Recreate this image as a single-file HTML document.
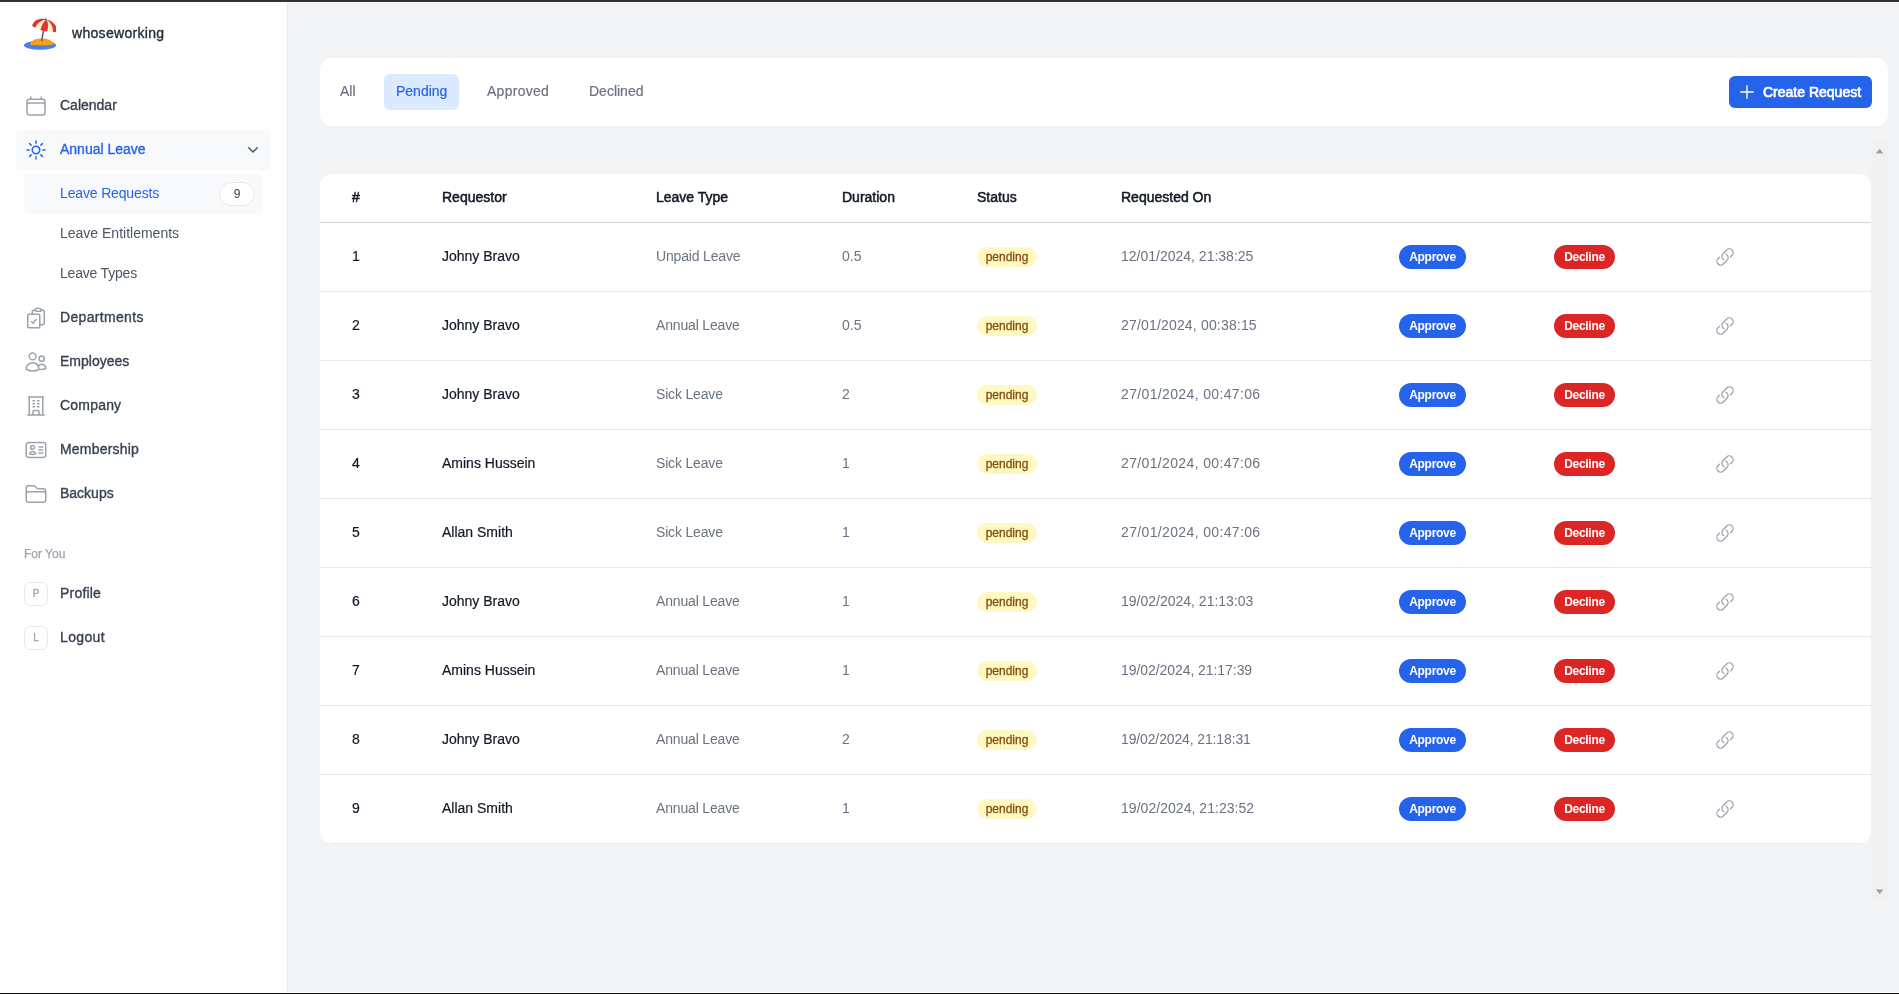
<!DOCTYPE html>
<html><head><meta charset="utf-8"><style>
*{box-sizing:border-box;margin:0;padding:0}
html,body{width:1899px;height:994px;overflow:hidden;background:#fff}
body{position:relative;font-family:"Liberation Sans",sans-serif;color:#111827}
#topbar{position:absolute;left:0;top:0;width:1899px;height:2px;background:#2f3035}
#botbar{position:absolute;left:0;top:993px;width:1899px;height:1px;background:#111}
#side{position:absolute;left:0;top:3px;width:288px;height:989px;background:#fff;border-right:1px solid #e5e7eb}
#main{position:absolute;left:288px;top:3px;width:1611px;height:989px;background:#f3f4f6}
.abs{position:absolute}
.ic{position:absolute;fill:none;stroke-linecap:round;stroke-linejoin:round}
.t{position:absolute;white-space:nowrap;will-change:transform}
.brand{font-size:14px;color:#1f2937;-webkit-text-stroke:0.35px #1f2937;letter-spacing:0.3px}
.nav{font-size:14px;color:#374151;-webkit-text-stroke:0.35px #374151}
.nav.act{color:#2563eb;-webkit-text-stroke:0.35px #2563eb}
.sub{font-size:14px;color:#4b5563}
.sub.act{color:#2563eb}
.hl{position:absolute;background:#f8f9fb;border-radius:5px}
.badge9{will-change:transform;position:absolute;left:219px;top:182px;width:36px;height:24px;border:1px solid #e5e7eb;border-radius:12px;background:#fff;font-size:12px;line-height:22px;text-align:center;color:#374151}
.foryou{font-size:12px;color:#9ca3af;-webkit-text-stroke:0.25px #9ca3af}
.av{will-change:transform;position:absolute;width:24px;height:24px;border:1px solid #e5e7eb;border-radius:6px;font-size:10px;line-height:22px;text-align:center;color:#9ca3af;background:#fff;-webkit-text-stroke:0.3px #9ca3af}
.card{position:absolute;background:#fff;border-radius:12px}
.tabbg{position:absolute;background:#dbeafe;border-radius:6px}
.tab{font-size:14px;color:#6b7280;-webkit-text-stroke:0.2px #6b7280}
.tab.act{color:#2563eb;-webkit-text-stroke:0.2px #2563eb}
.btn{position:absolute;background:#2563eb;border-radius:6px}
.btntxt{font-size:14px;color:#fff;-webkit-text-stroke:0.7px #fff}
.th{font-size:14px;color:#111827;-webkit-text-stroke:0.5px #111827}
.td1{font-size:14px;color:#111827;-webkit-text-stroke:0.2px #111827}
.td2{font-size:14px;color:#6b7280}
.pend{will-change:transform;position:absolute;width:60px;height:20px;border-radius:10px;background:#fef9c3;color:#854d0e;font-size:12px;line-height:20px;text-align:center;-webkit-text-stroke:0.3px #854d0e}
.pill{will-change:transform;position:absolute;height:24px;border-radius:12px;color:#fff;font-size:12px;font-weight:bold;line-height:24px;text-align:center;letter-spacing:-0.3px}
.ap{background:#2563eb}
.de{background:#dc2626}
</style></head>
<body>
<div id="topbar"></div>
<div id="side"></div><div id="main"></div>
<svg class="abs" style="left:24px;top:18px;width:32px;height:32px" viewBox="0 0 32 32">
<ellipse cx="16" cy="27.3" rx="16" ry="4.5" fill="#4a80e8"/>
<path d="M6 26.8 C6.5 22.6 11.5 20.6 17.5 20.6 C23.5 20.6 28.8 22.4 29.5 26.4 C22 27.6 13 27.6 6 26.8z" fill="#f4a019"/>
<path d="M21.7 1 L17.6 23.2" stroke="#59606b" stroke-width="1.5"/>
<g transform="rotate(14 21 8)">
<path d="M21 1.2 C14 1.2 8.5 5 8.5 10.8 Q10.75 12.4 13 11.9 Q15.25 13.2 17.5 12.8 Q21 14.2 24.5 12.8 Q26.75 13.2 29 11.9 Q31.25 12.4 33.5 10.8 C33.5 5 28 1.2 21 1.2 Z" fill="#fdf3c0"/>
<path d="M21 1.2 C14 1.2 8.5 5 8.5 10.8 Q10.25 12.2 12 11.7 C12.5 7.5 15.5 3.5 21 1.2 Z" fill="#df343c"/>
<path d="M21 1.2 C18.5 4 17.5 8 17.5 12.8 Q21 14.2 24.5 12.8 C24.5 8 23.5 4 21 1.2 Z" fill="#df343c"/>
<path d="M21 1.2 C28 1.2 33.5 5 33.5 10.8 Q31.75 12.2 30 11.7 C29.5 7.5 26.5 3.5 21 1.2 Z" fill="#df343c"/>
</g>
<path d="M22 0.3 L21.7 2.2" stroke="#59606b" stroke-width="1.4"/>
</svg>
<div class="t brand" style="left:72px;top:23.0px;height:20px;line-height:20px">whoseworking</div>
<div class="hl" style="left:16px;top:130px;width:255px;height:40px"></div>
<div class="hl" style="left:24px;top:174px;width:239px;height:40px"></div>
<svg class="ic" style="left:24px;top:94px;width:24px;height:24px;stroke:#9ca3af;stroke-width:1.5" viewBox="0 0 24 24"><path d="M6.75 3v2.25M17.25 3v2.25M3 18.75V7.5a2.25 2.25 0 012.25-2.25h13.5A2.25 2.25 0 0121 7.5v11.25m-18 0A2.25 2.25 0 005.25 21h13.5A2.25 2.25 0 0021 18.75m-18 0v-7.5A2.25 2.25 0 015.25 9h13.5A2.25 2.25 0 0121 11.25v7.5"/></svg>
<div class="t nav" style="left:60px;top:95.0px;height:20px;line-height:20px">Calendar</div>
<svg class="ic" style="left:24px;top:138px;width:24px;height:24px;stroke:#2563eb;stroke-width:1.5" viewBox="0 0 24 24"><path d="M12 3v2.25m6.364.386l-1.591 1.591M21 12h-2.25m-.386 6.364l-1.591-1.591M12 18.75V21m-4.773-4.227l-1.591 1.591M5.25 12H3m4.227-4.773L5.636 5.636M15.75 12a3.75 3.75 0 11-7.5 0 3.75 3.75 0 017.5 0z"/></svg>
<div class="t nav act" style="left:60px;top:139.0px;height:20px;line-height:20px">Annual Leave</div>
<svg class="ic" style="left:240px;top:140px;width:20px;height:20px;stroke:#4b5563;stroke-width:1.5" viewBox="0 0 20 20"><path d="M8.7 7.7 L13 12 L17.3 7.7"/></svg>
<div class="t sub act" style="left:60px;top:183.0px;height:20px;line-height:20px;letter-spacing:-0.150px">Leave Requests</div>
<div class="badge9">9</div>
<div class="t sub" style="left:60px;top:223.0px;height:20px;line-height:20px">Leave Entitlements</div>
<div class="t sub" style="left:60px;top:263.0px;height:20px;line-height:20px;letter-spacing:-0.200px">Leave Types</div>
<svg class="ic" style="left:24px;top:306px;width:24px;height:24px;stroke:#9ca3af;stroke-width:1.5" viewBox="0 0 24 24"><path d="M11.35 3.836c-.065.21-.1.433-.1.664 0 .414.336.75.75.75h4.5a.75.75 0 00.75-.75 2.25 2.25 0 00-.1-.664m-5.8 0A2.251 2.251 0 0113.5 2.25H15c1.012 0 1.867.668 2.15 1.586m-5.8 0c-.376.023-.75.05-1.124.08C9.095 4.01 8.25 4.973 8.25 6.108V8.25m8.9-4.414c.376.023.75.05 1.124.08 1.131.094 1.976 1.057 1.976 2.192V16.5A2.25 2.25 0 0118 18.75h-2.25m-7.5-10.5H4.875c-.621 0-1.125.504-1.125 1.125v11.25c0 .621.504 1.125 1.125 1.125h9.75c.621 0 1.125-.504 1.125-1.125V18.75m-7.5-10.5h6.375c.621 0 1.125.504 1.125 1.125v9.375m-8.25-3l1.5 1.5 3-3.75"/></svg>
<div class="t nav" style="left:60px;top:307.0px;height:20px;line-height:20px;letter-spacing:0.330px">Departments</div>
<svg class="ic" style="left:24px;top:350px;width:24px;height:24px;stroke:#9ca3af;stroke-width:1.5" viewBox="0 0 24 24"><path d="M15 19.128a9.38 9.38 0 002.625.372 9.337 9.337 0 004.121-.952 4.125 4.125 0 00-7.533-2.493M15 19.128v-.003c0-1.113-.285-2.16-.786-3.07M15 19.128v.106A12.318 12.318 0 018.624 21c-2.331 0-4.512-.645-6.374-1.766l-.001-.109a6.375 6.375 0 0111.964-3.07M12 6.375a3.375 3.375 0 11-6.75 0 3.375 3.375 0 016.75 0zm8.25 2.25a2.625 2.625 0 11-5.25 0 2.625 2.625 0 015.25 0z"/></svg>
<div class="t nav" style="left:60px;top:351.0px;height:20px;line-height:20px">Employees</div>
<svg class="ic" style="left:24px;top:394px;width:24px;height:24px;stroke:#9ca3af;stroke-width:1.5" viewBox="0 0 24 24"><path d="M3.75 21h16.5M4.5 3h15M5.25 3v18m13.5-18v18M9 6.75h1.5m-1.5 3h1.5m-1.5 3h1.5m3-6H15m-1.5 3H15m-1.5 3H15M9 21v-3.375c0-.621.504-1.125 1.125-1.125h3.75c.621 0 1.125.504 1.125 1.125V21"/></svg>
<div class="t nav" style="left:60px;top:395.0px;height:20px;line-height:20px;letter-spacing:0.200px">Company</div>
<svg class="ic" style="left:24px;top:438px;width:24px;height:24px;stroke:#9ca3af;stroke-width:1.5" viewBox="0 0 24 24"><path d="M15 9h3.75M15 12h3.75M15 15h3.75M4.5 19.5h15a2.25 2.25 0 002.25-2.25V6.75A2.25 2.25 0 0019.5 4.5h-15a2.25 2.25 0 00-2.25 2.25v10.5A2.25 2.25 0 004.5 19.5zm6-10.125a1.875 1.875 0 11-3.75 0 1.875 1.875 0 013.75 0zm1.294 6.336a6.721 6.721 0 01-3.17.789 6.721 6.721 0 01-3.168-.789 3.376 3.376 0 016.338 0z"/></svg>
<div class="t nav" style="left:60px;top:439.0px;height:20px;line-height:20px;letter-spacing:0.200px">Membership</div>
<svg class="ic" style="left:24px;top:482px;width:24px;height:24px;stroke:#9ca3af;stroke-width:1.5" viewBox="0 0 24 24"><path d="M2.25 12.75V12A2.25 2.25 0 014.5 9.75h15A2.25 2.25 0 0121.75 12v.75m-8.69-6.44l-2.12-2.12a1.5 1.5 0 00-1.061-.44H4.5A2.25 2.25 0 002.25 6v12a2.25 2.25 0 002.25 2.25h15A2.25 2.25 0 0021.75 18V9a2.25 2.25 0 00-2.25-2.25h-5.379a1.5 1.5 0 01-1.06-.44z"/></svg>
<div class="t nav" style="left:60px;top:483.0px;height:20px;line-height:20px">Backups</div>
<div class="t foryou" style="left:24px;top:544.0px;height:20px;line-height:20px">For You</div>
<div class="av" style="left:24px;top:582px">P</div>
<div class="t nav" style="left:60px;top:583.0px;height:20px;line-height:20px;letter-spacing:0.200px">Profile</div>
<div class="av" style="left:24px;top:626px">L</div>
<div class="t nav" style="left:60px;top:627.0px;height:20px;line-height:20px;letter-spacing:0.340px">Logout</div>
<div class="card" style="left:320px;top:58px;width:1568px;height:68px"></div>
<div class="tabbg" style="left:384px;top:74px;width:75px;height:36px"></div>
<div class="t tab" style="left:340px;top:81.0px;height:20px;line-height:20px">All</div>
<div class="t tab act" style="left:396px;top:81.0px;height:20px;line-height:20px">Pending</div>
<div class="t tab" style="left:487px;top:81.0px;height:20px;line-height:20px;letter-spacing:0.280px">Approved</div>
<div class="t tab" style="left:589px;top:81.0px;height:20px;line-height:20px">Declined</div>
<div class="btn" style="left:1729px;top:76px;width:143px;height:32px"></div>
<svg class="abs" style="left:1740px;top:85px;width:14px;height:14px" viewBox="0 0 14 14"><path d="M7 0.3v13.4M0.3 7h13.4" stroke="#fff" stroke-width="1.4"/></svg>
<div class="t btntxt" style="left:1763px;top:82.0px;height:20px;line-height:20px">Create Request</div>
<div class="abs" style="left:1871px;top:142px;width:17px;height:758px;background:#f1f1f1"></div>
<svg class="abs" style="left:1871px;top:142px;width:17px;height:17px" viewBox="0 0 17 17"><polygon points="4.8,11.4 12.4,11.4 8.6,6.8" fill="#9aa0a6"/></svg>
<svg class="abs" style="left:1871px;top:883px;width:17px;height:17px" viewBox="0 0 17 17"><polygon points="4.8,6.6 12.4,6.6 8.6,11.2" fill="#9aa0a6"/></svg>
<div class="card" style="left:320px;top:174px;width:1551px;height:669px"></div>
<div class="abs" style="left:332px;top:843px;width:1527px;height:1px;background:#e5e7eb"></div>
<div class="t th" style="left:352px;top:187.0px;height:20px;line-height:20px">#</div>
<div class="t th" style="left:442px;top:187.0px;height:20px;line-height:20px">Requestor</div>
<div class="t th" style="left:656px;top:187.0px;height:20px;line-height:20px">Leave Type</div>
<div class="t th" style="left:842px;top:187.0px;height:20px;line-height:20px">Duration</div>
<div class="t th" style="left:977px;top:187.0px;height:20px;line-height:20px">Status</div>
<div class="t th" style="left:1121px;top:187.0px;height:20px;line-height:20px">Requested On</div>
<div class="abs" style="left:320px;top:222px;width:1551px;height:1px;background:#d1d5db"></div>
<div class="t td1" style="left:352px;top:246.0px;height:20px;line-height:20px">1</div>
<div class="t td1" style="left:442px;top:246.0px;height:20px;line-height:20px">Johny Bravo</div>
<div class="t td2" style="left:656px;top:246.0px;height:20px;line-height:20px;letter-spacing:-0.170px">Unpaid Leave</div>
<div class="t td2" style="left:842px;top:246.0px;height:20px;line-height:20px">0.5</div>
<div class="pend" style="left:977px;top:247px">pending</div>
<div class="t td2" style="left:1121px;top:246.0px;height:20px;line-height:20px">12/01/2024, 21:38:25</div>
<div class="pill ap" style="left:1399px;top:245px;width:67px">Approve</div>
<div class="pill de" style="left:1554px;top:245px;width:61px">Decline</div>
<svg class="ic" style="left:1715px;top:247px;width:20px;height:20px;stroke:#9ca3af;stroke-width:1.5" viewBox="0 0 24 24"><path d="M13.19 8.688a4.5 4.5 0 011.242 7.244l-4.5 4.5a4.5 4.5 0 01-6.364-6.364l1.757-1.757m13.35-.622l1.757-1.757a4.5 4.5 0 00-6.364-6.364l-4.5 4.5a4.5 4.5 0 001.242 7.244"/></svg>
<div class="abs" style="left:320px;top:291px;width:1551px;height:1px;background:#e5e7eb"></div>
<div class="t td1" style="left:352px;top:315.0px;height:20px;line-height:20px">2</div>
<div class="t td1" style="left:442px;top:315.0px;height:20px;line-height:20px">Johny Bravo</div>
<div class="t td2" style="left:656px;top:315.0px;height:20px;line-height:20px;letter-spacing:-0.170px">Annual Leave</div>
<div class="t td2" style="left:842px;top:315.0px;height:20px;line-height:20px">0.5</div>
<div class="pend" style="left:977px;top:316px">pending</div>
<div class="t td2" style="left:1121px;top:315.0px;height:20px;line-height:20px;letter-spacing:0.174px">27/01/2024, 00:38:15</div>
<div class="pill ap" style="left:1399px;top:314px;width:67px">Approve</div>
<div class="pill de" style="left:1554px;top:314px;width:61px">Decline</div>
<svg class="ic" style="left:1715px;top:316px;width:20px;height:20px;stroke:#9ca3af;stroke-width:1.5" viewBox="0 0 24 24"><path d="M13.19 8.688a4.5 4.5 0 011.242 7.244l-4.5 4.5a4.5 4.5 0 01-6.364-6.364l1.757-1.757m13.35-.622l1.757-1.757a4.5 4.5 0 00-6.364-6.364l-4.5 4.5a4.5 4.5 0 001.242 7.244"/></svg>
<div class="abs" style="left:320px;top:360px;width:1551px;height:1px;background:#e5e7eb"></div>
<div class="t td1" style="left:352px;top:384.0px;height:20px;line-height:20px">3</div>
<div class="t td1" style="left:442px;top:384.0px;height:20px;line-height:20px">Johny Bravo</div>
<div class="t td2" style="left:656px;top:384.0px;height:20px;line-height:20px;letter-spacing:-0.170px">Sick Leave</div>
<div class="t td2" style="left:842px;top:384.0px;height:20px;line-height:20px">2</div>
<div class="pend" style="left:977px;top:385px">pending</div>
<div class="t td2" style="left:1121px;top:384.0px;height:20px;line-height:20px;letter-spacing:0.358px">27/01/2024, 00:47:06</div>
<div class="pill ap" style="left:1399px;top:383px;width:67px">Approve</div>
<div class="pill de" style="left:1554px;top:383px;width:61px">Decline</div>
<svg class="ic" style="left:1715px;top:385px;width:20px;height:20px;stroke:#9ca3af;stroke-width:1.5" viewBox="0 0 24 24"><path d="M13.19 8.688a4.5 4.5 0 011.242 7.244l-4.5 4.5a4.5 4.5 0 01-6.364-6.364l1.757-1.757m13.35-.622l1.757-1.757a4.5 4.5 0 00-6.364-6.364l-4.5 4.5a4.5 4.5 0 001.242 7.244"/></svg>
<div class="abs" style="left:320px;top:429px;width:1551px;height:1px;background:#e5e7eb"></div>
<div class="t td1" style="left:352px;top:453.0px;height:20px;line-height:20px">4</div>
<div class="t td1" style="left:442px;top:453.0px;height:20px;line-height:20px">Amins Hussein</div>
<div class="t td2" style="left:656px;top:453.0px;height:20px;line-height:20px;letter-spacing:-0.170px">Sick Leave</div>
<div class="t td2" style="left:842px;top:453.0px;height:20px;line-height:20px">1</div>
<div class="pend" style="left:977px;top:454px">pending</div>
<div class="t td2" style="left:1121px;top:453.0px;height:20px;line-height:20px;letter-spacing:0.358px">27/01/2024, 00:47:06</div>
<div class="pill ap" style="left:1399px;top:452px;width:67px">Approve</div>
<div class="pill de" style="left:1554px;top:452px;width:61px">Decline</div>
<svg class="ic" style="left:1715px;top:454px;width:20px;height:20px;stroke:#9ca3af;stroke-width:1.5" viewBox="0 0 24 24"><path d="M13.19 8.688a4.5 4.5 0 011.242 7.244l-4.5 4.5a4.5 4.5 0 01-6.364-6.364l1.757-1.757m13.35-.622l1.757-1.757a4.5 4.5 0 00-6.364-6.364l-4.5 4.5a4.5 4.5 0 001.242 7.244"/></svg>
<div class="abs" style="left:320px;top:498px;width:1551px;height:1px;background:#e5e7eb"></div>
<div class="t td1" style="left:352px;top:522.0px;height:20px;line-height:20px">5</div>
<div class="t td1" style="left:442px;top:522.0px;height:20px;line-height:20px">Allan Smith</div>
<div class="t td2" style="left:656px;top:522.0px;height:20px;line-height:20px;letter-spacing:-0.170px">Sick Leave</div>
<div class="t td2" style="left:842px;top:522.0px;height:20px;line-height:20px">1</div>
<div class="pend" style="left:977px;top:523px">pending</div>
<div class="t td2" style="left:1121px;top:522.0px;height:20px;line-height:20px;letter-spacing:0.358px">27/01/2024, 00:47:06</div>
<div class="pill ap" style="left:1399px;top:521px;width:67px">Approve</div>
<div class="pill de" style="left:1554px;top:521px;width:61px">Decline</div>
<svg class="ic" style="left:1715px;top:523px;width:20px;height:20px;stroke:#9ca3af;stroke-width:1.5" viewBox="0 0 24 24"><path d="M13.19 8.688a4.5 4.5 0 011.242 7.244l-4.5 4.5a4.5 4.5 0 01-6.364-6.364l1.757-1.757m13.35-.622l1.757-1.757a4.5 4.5 0 00-6.364-6.364l-4.5 4.5a4.5 4.5 0 001.242 7.244"/></svg>
<div class="abs" style="left:320px;top:567px;width:1551px;height:1px;background:#e5e7eb"></div>
<div class="t td1" style="left:352px;top:591.0px;height:20px;line-height:20px">6</div>
<div class="t td1" style="left:442px;top:591.0px;height:20px;line-height:20px">Johny Bravo</div>
<div class="t td2" style="left:656px;top:591.0px;height:20px;line-height:20px;letter-spacing:-0.170px">Annual Leave</div>
<div class="t td2" style="left:842px;top:591.0px;height:20px;line-height:20px">1</div>
<div class="pend" style="left:977px;top:592px">pending</div>
<div class="t td2" style="left:1121px;top:591.0px;height:20px;line-height:20px">19/02/2024, 21:13:03</div>
<div class="pill ap" style="left:1399px;top:590px;width:67px">Approve</div>
<div class="pill de" style="left:1554px;top:590px;width:61px">Decline</div>
<svg class="ic" style="left:1715px;top:592px;width:20px;height:20px;stroke:#9ca3af;stroke-width:1.5" viewBox="0 0 24 24"><path d="M13.19 8.688a4.5 4.5 0 011.242 7.244l-4.5 4.5a4.5 4.5 0 01-6.364-6.364l1.757-1.757m13.35-.622l1.757-1.757a4.5 4.5 0 00-6.364-6.364l-4.5 4.5a4.5 4.5 0 001.242 7.244"/></svg>
<div class="abs" style="left:320px;top:636px;width:1551px;height:1px;background:#e5e7eb"></div>
<div class="t td1" style="left:352px;top:660.0px;height:20px;line-height:20px">7</div>
<div class="t td1" style="left:442px;top:660.0px;height:20px;line-height:20px">Amins Hussein</div>
<div class="t td2" style="left:656px;top:660.0px;height:20px;line-height:20px;letter-spacing:-0.170px">Annual Leave</div>
<div class="t td2" style="left:842px;top:660.0px;height:20px;line-height:20px">1</div>
<div class="pend" style="left:977px;top:661px">pending</div>
<div class="t td2" style="left:1121px;top:660.0px;height:20px;line-height:20px;letter-spacing:-0.063px">19/02/2024, 21:17:39</div>
<div class="pill ap" style="left:1399px;top:659px;width:67px">Approve</div>
<div class="pill de" style="left:1554px;top:659px;width:61px">Decline</div>
<svg class="ic" style="left:1715px;top:661px;width:20px;height:20px;stroke:#9ca3af;stroke-width:1.5" viewBox="0 0 24 24"><path d="M13.19 8.688a4.5 4.5 0 011.242 7.244l-4.5 4.5a4.5 4.5 0 01-6.364-6.364l1.757-1.757m13.35-.622l1.757-1.757a4.5 4.5 0 00-6.364-6.364l-4.5 4.5a4.5 4.5 0 001.242 7.244"/></svg>
<div class="abs" style="left:320px;top:705px;width:1551px;height:1px;background:#e5e7eb"></div>
<div class="t td1" style="left:352px;top:729.0px;height:20px;line-height:20px">8</div>
<div class="t td1" style="left:442px;top:729.0px;height:20px;line-height:20px">Johny Bravo</div>
<div class="t td2" style="left:656px;top:729.0px;height:20px;line-height:20px;letter-spacing:-0.170px">Annual Leave</div>
<div class="t td2" style="left:842px;top:729.0px;height:20px;line-height:20px">2</div>
<div class="pend" style="left:977px;top:730px">pending</div>
<div class="t td2" style="left:1121px;top:729.0px;height:20px;line-height:20px;letter-spacing:-0.132px">19/02/2024, 21:18:31</div>
<div class="pill ap" style="left:1399px;top:728px;width:67px">Approve</div>
<div class="pill de" style="left:1554px;top:728px;width:61px">Decline</div>
<svg class="ic" style="left:1715px;top:730px;width:20px;height:20px;stroke:#9ca3af;stroke-width:1.5" viewBox="0 0 24 24"><path d="M13.19 8.688a4.5 4.5 0 011.242 7.244l-4.5 4.5a4.5 4.5 0 01-6.364-6.364l1.757-1.757m13.35-.622l1.757-1.757a4.5 4.5 0 00-6.364-6.364l-4.5 4.5a4.5 4.5 0 001.242 7.244"/></svg>
<div class="abs" style="left:320px;top:774px;width:1551px;height:1px;background:#e5e7eb"></div>
<div class="t td1" style="left:352px;top:798.0px;height:20px;line-height:20px">9</div>
<div class="t td1" style="left:442px;top:798.0px;height:20px;line-height:20px">Allan Smith</div>
<div class="t td2" style="left:656px;top:798.0px;height:20px;line-height:20px;letter-spacing:-0.170px">Annual Leave</div>
<div class="t td2" style="left:842px;top:798.0px;height:20px;line-height:20px">1</div>
<div class="pend" style="left:977px;top:799px">pending</div>
<div class="t td2" style="left:1121px;top:798.0px;height:20px;line-height:20px;letter-spacing:0.042px">19/02/2024, 21:23:52</div>
<div class="pill ap" style="left:1399px;top:797px;width:67px">Approve</div>
<div class="pill de" style="left:1554px;top:797px;width:61px">Decline</div>
<svg class="ic" style="left:1715px;top:799px;width:20px;height:20px;stroke:#9ca3af;stroke-width:1.5" viewBox="0 0 24 24"><path d="M13.19 8.688a4.5 4.5 0 011.242 7.244l-4.5 4.5a4.5 4.5 0 01-6.364-6.364l1.757-1.757m13.35-.622l1.757-1.757a4.5 4.5 0 00-6.364-6.364l-4.5 4.5a4.5 4.5 0 001.242 7.244"/></svg>
<div id="botbar"></div>
</body></html>
